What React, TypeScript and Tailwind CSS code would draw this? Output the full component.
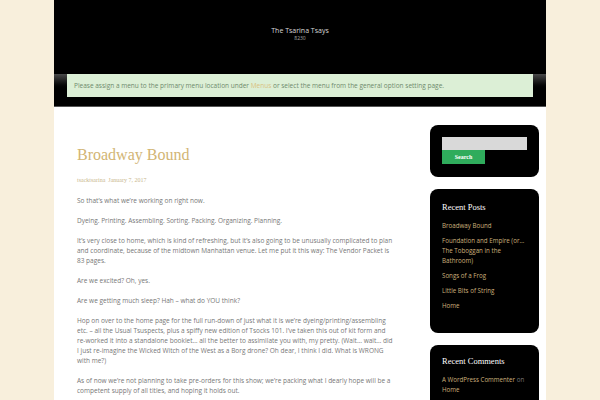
export default function App() {
  const posts = [
    "Broadway Bound",
    "Foundation and Empire (or… The Toboggan in the Bathroom)",
    "Songs of a Frog",
    "Little Bits of String",
    "Home",
  ];

  return (
    <div className="min-h-screen bg-[#f8efdc]" style={{ fontFamily: '"Open Sans", sans-serif' }}>
      <div className="mx-auto w-[492px]">
        {/* Site header */}
        <header className="flex h-[74px] flex-col items-center bg-black pt-[26px]">
          <p className="text-[7px] leading-[9px] text-[#d8d8d8]">The Tsarina Tsays</p>
          <p className="text-[5px] leading-[7px] text-[#aaaaaa]">8230</p>
        </header>

        {/* Menu notice */}
        <div className="h-[33px] border-b border-[#555] bg-gradient-to-b from-[#4a4a4a] via-black to-black px-[13px]">
          <div className="flex h-[23px] items-center bg-[#dcefd6] px-[7px] text-[6.5px] text-[#6e8a6c]">
            <span>
              Please assign a menu to the primary menu location under{" "}
              <span className="text-[#d9c27f]">Menus</span> or select the menu from the general option setting page.
            </span>
          </div>
        </div>

        {/* Content */}
        <div className="flex bg-white">
          <main className="w-[376px] pl-[23px] pt-[39px]">
            <div className="w-[318px]">
              <h1 className="text-[16px] leading-[18px] text-[#d2b574]" style={{ fontFamily: '"Liberation Serif", serif' }}>
                Broadway Bound
              </h1>
              <p className="mt-[12px] text-[6px] leading-[8px] text-[#c9b78e]" style={{ fontFamily: '"Liberation Serif", serif' }}>
                tsacktsarina&nbsp;&nbsp;January 7, 2017
              </p>
              <div className="mt-[12px] flex flex-col gap-[10px] text-[6.5px] leading-[10px] text-[#777777]">
                <p>So that’s what we’re working on right now.</p>
                <p>Dyeing. Printing. Assembling. Sorting. Packing. Organizing. Planning.</p>
                <p>
                  It’s very close to home, which is kind of refreshing, but it’s also going to be unusually complicated to plan
                  and coordinate, because of the midtown Manhattan venue. Let me put it this way: The Vendor Packet is 83 pages.
                </p>
                <p>Are we excited? Oh, yes.</p>
                <p>Are we getting much sleep? Hah – what do YOU think?</p>
                <p>
                  Hop on over to the home page for the full run-down of just what it is we’re dyeing/printing/assembling etc. – all
                  the Usual Tsuspects, plus a spiffy new edition of Tsocks 101. I’ve taken this out of kit form and re-worked it
                  into a standalone booklet… all the better to assimilate you with, my pretty. (Wait… wait… did I just re-imagine
                  the Wicked Witch of the West as a Borg drone? Oh dear, I think I did. What is WRONG with me?)
                </p>
                <p>
                  As of now we’re not planning to take pre-orders for this show; we’re packing what I dearly hope will be a
                  competent supply of all titles, and hoping it holds out.
                </p>
              </div>
            </div>
          </main>

          <aside className="flex w-[109px] flex-col gap-[12px] pt-[18px]">
            <div className="rounded-[8px] bg-black px-[12px] pb-[13px] pt-[12px]">
              <div className="h-[13px] w-[85px] bg-[#d9d9d9]" />
              <button
                className="flex h-[14px] w-[43px] items-center justify-center bg-[#2fac5c] text-[6px] font-bold text-white"
                style={{ fontFamily: '"Liberation Serif", serif' }}
              >
                Search
              </button>
            </div>

            <div className="h-[144px] rounded-[8px] bg-black pl-[12px] pr-[6px] pt-[12px]">
              <h2 className="text-[8.5px] leading-[12px] text-white" style={{ fontFamily: '"Liberation Serif", serif' }}>
                Recent Posts
              </h2>
              <ul className="mt-[8px] flex flex-col gap-[5px] text-[6.2px] leading-[10px] text-[#cdb07c]">
                {posts.map((p) => (
                  <li key={p}>{p}</li>
                ))}
              </ul>
            </div>

            <div className="h-[60px] rounded-t-[8px] bg-black pl-[12px] pr-[6px] pt-[10px]">
              <h2 className="text-[8.5px] leading-[12px] text-white" style={{ fontFamily: '"Liberation Serif", serif' }}>
                Recent Comments
              </h2>
              <p className="mt-[8px] text-[6.2px] leading-[10px] text-[#cdb07c]">
                A WordPress Commenter <span className="text-[#777]">on</span> Home
              </p>
            </div>
          </aside>
        </div>
      </div>
    </div>
  );
}
